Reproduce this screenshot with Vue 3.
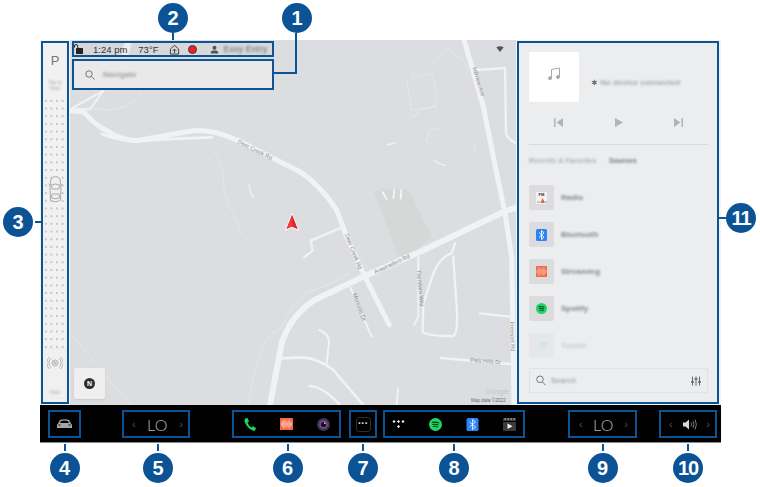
<script setup>
const sources = [
  { name: 'Radio', kind: 'radio' },
  { name: 'Bluetooth', kind: 'bt' },
  { name: 'Streaming', kind: 'stream' },
  { name: 'Spotify', kind: 'spotify' },
  { name: 'Tuneln', kind: 'tunein' },
]
const bars = [3, 6, 9, 5, 8, 4, 7, 9, 5, 3]
const roads = [
  { d: 'M0 212 L40 215 Q75 255 110 272 Q150 300 200 302 Q290 285 370 272 Q430 268 500 300 L600 350 L690 395 Q750 435 800 510 L830 590 L880 700 L958 855', w: 15 },
  { d: 'M95 282 Q140 300 200 305 Q300 295 425 292', w: 8 },
  { d: 'M0 208 L100 152 L60 208 Z', w: 6 },
  { d: 'M1350 498 L1300 516 L1040 640 L880 710 L730 782 Q660 830 635 910 L600 1095', w: 18 },
  { d: 'M1182 0 L1240 200 L1280 400 L1305 520 L1325 650 L1332 1095', w: 15 },
  { d: 'M1220 90 L1305 84 L1308 280 Q1315 300 1340 310', w: 7 },
  { d: 'M812 564 L722 602 L728 632 L702 652', w: 7 },
  { d: 'M840 740 L905 890', w: 6 },
  { d: 'M1155 610 L1145 640 Q1110 650 1090 700 L1060 790 L1058 875 Q1070 888 1150 888 Q1165 880 1160 800 L1155 730 L1150 650', w: 7 },
  { d: 'M1045 650 L1045 830 L1032 855', w: 6 },
  { d: 'M1230 820 L1320 830', w: 7 },
  { d: 'M1112 954 L1320 972', w: 7 },
  { d: 'M632 955 L700 952 Q750 958 790 990 L880 1095', w: 8 },
  { d: 'M748 870 Q785 885 775 925 L770 970', w: 6 },
  { d: 'M718 1038 Q760 1040 810 1095', w: 7 },
  { d: 'M984 1045 L980 1095', w: 6 },
  { d: 'M537 434 Q540 455 550 474', w: 4 },
  { d: 'M953 315 L977 308', w: 4 },
  { d: 'M1092 360 Q1098 370 1126 376', w: 4 },
]
const paths = [
  'M422 332 Q445 335 462 405 Q455 450 480 500 Q505 540 515 585',
  'M50 200 Q90 215 150 205 Q200 190 215 155',
  'M0 880 Q70 960 150 1060 L185 1095',
  'M535 1095 Q560 930 605 880 Q640 870 650 830 Q690 760 730 750 Q850 710 860 670',
  'M1030 95 L1030 110 L1010 125 L1025 210 L1095 200 L1100 150 L1085 100 L1030 115',
  'M1085 70 L1130 25 L1180 60 L1195 100',
  'M1020 235 L1045 222 L1045 210 L1100 198 L1098 220',
  'M1110 265 L1078 270 L1068 305 L1090 315',
  'M1210 305 L1216 335',
]
</script>

<template>
  <div class="page">
    <div class="screen">
      <div class="main">
        <aside class="park frame">
          <div class="gear">P</div>
          <div class="hold">Tap to<br />Hold</div>
          <div class="dots">
            <svg class="car-top" width="15" height="30" viewBox="0 0 15 30" fill="none" stroke="#9a9a9a" stroke-width="0.8">
              <path d="M3 5 Q7.500 0 12 5 L13 13 L12.500 26 Q7.500 29.500 2.500 26 L2 13 Z" fill="#f0f0f0" />
              <path d="M3.500 11 Q7.500 9 11.500 11 L11 15 L4 15 Z M4 20 L11 20 L11.500 24 Q7.500 25.500 3.500 24 Z" />
              <path d="M2 11 L0.500 10 M13 11 L14.500 10" />
            </svg>
          </div>
          <div class="nfc">
            <svg width="16" height="16" viewBox="0 0 16 16" fill="none" stroke="#9c9c9c" stroke-width="0.7">
              <circle cx="8" cy="8" r="3" />
              <path d="M4 3.500 A6 6 0 0 0 4 12.500 M12 3.500 A6 6 0 0 1 12 12.500 M2.500 2 A8 8 0 0 0 2.500 14 M13.500 2 A8 8 0 0 1 13.500 14" />
              <path d="M7 9.500 V6.500 L9 9.500 V6.500" />
            </svg>
            <span class="nfc-label">Hold</span>
          </div>
        </aside>

        <section class="map">
          <svg class="map-art" viewBox="0 0 1350 1095" width="450" height="365">
            <path v-for="p in paths" :key="p" :d="p" fill="none" stroke="#e7e8ea" stroke-width="2.500" />
            <path d="M912 456 Q960 438 1016 450 L1085 590 L1040 630 L985 650 Z" fill="#d6d7d7" />
            <path v-for="r in roads" :key="r.d" :d="r.d" fill="none" stroke="#f1f2f3" :stroke-width="r.w" stroke-linecap="round" stroke-linejoin="round" />
            <path d="M973 449 L970 475 M994 449 L992 476 M938 456 L950 478" stroke="#f6f6f7" stroke-width="5" stroke-linecap="round" />
            <g class="map-label">
              <text transform="translate(502 309) rotate(27)">Deer Creek Rd</text>
              <text transform="translate(824 584) rotate(68)">Deer Creek Rd</text>
              <text transform="translate(916 702) rotate(-25)">Arastradero Rd</text>
              <text transform="translate(1040 690) rotate(84)">Thendara Way</text>
              <text transform="translate(848 762) rotate(70)">Manuela Dr</text>
              <text transform="translate(1207 84) rotate(73)">Hillview Ave</text>
              <text transform="translate(1320 845) rotate(88)">Fremont Rd</text>
              <text transform="translate(1200 965) rotate(5)">Palo Hills Dr</text>
              <text class="attrib" x="1203" y="1086">Map data ©2022</text>
              <text class="google" x="1246" y="1062">Google</text>
            </g>
            <path d="M666 520 L686 570 L666 562 L646 570 Z" fill="#f2383a" stroke="#fff" stroke-width="3" stroke-linejoin="round" />
            <path d="M666 524 L682 566 L666 558 Z" fill="#d92b2f" />
            <path d="M1279 22 Q1290 15 1301 22 L1290 36 Z" fill="#555" />
          </svg>

          <div class="status frame">
            <svg class="lock" width="9" height="10" viewBox="0 0 9 10" fill="#222">
              <rect x="2" y="4" width="7" height="6" rx="0.500" />
              <path d="M0.500 3.500 V2 A1.500 1.500 0 0 1 3.500 2 L4 4" fill="none" stroke="#222" stroke-width="1" />
            </svg>
            <span class="clock">1:24 pm</span>
            <span class="temp">73°F</span>
            <svg class="home" width="11" height="11" viewBox="0 0 12 12" fill="none" stroke="#333" stroke-width="1">
              <path d="M1.500 5.500 L6 1.500 L10.500 5.500 V11 H1.500 Z" />
              <path d="M6 10 V6 M4 7.500 L6 5.500 L8 7.500" />
            </svg>
            <span class="rec"></span>
            <svg class="person" width="9" height="9" viewBox="0 0 10 10" fill="#555">
              <circle cx="5" cy="3" r="2.200" />
              <path d="M1 9.500 V8 Q1 6.500 3 6 H7 Q9 6.500 9 8 V9.500 Z" />
            </svg>
            <span class="entry">Easy Entry</span>
          </div>

          <div class="navigate frame">
            <svg width="10" height="10" viewBox="0 0 10 10" fill="none" stroke="#777" stroke-width="1">
              <circle cx="4" cy="4" r="3.200" />
              <path d="M6.500 6.500 L9.500 9.500" />
            </svg>
            <span class="nav-text">Navigate</span>
            <i class="leader"></i>
            <b class="badge b1">1</b>
          </div>

          <button class="compass">
            <span>N</span>
          </button>
        </section>

        <aside class="media frame">
          <div class="now">
            <div class="art">
              <svg width="14" height="14" viewBox="0 0 14 14" fill="none" stroke="#a9a9a9" stroke-width="1">
                <path d="M4.500 11 V2.500 L12.500 1 V9.500" />
                <circle cx="3" cy="11.200" r="1.500" fill="#a9a9a9" />
                <circle cx="11" cy="10" r="1.500" fill="#a9a9a9" />
              </svg>
            </div>
            <span class="no-device"><em>∗</em> <span>No device connected</span></span>
          </div>
          <div class="controls">
            <svg width="9" height="9" viewBox="0 0 9 9" fill="#b3b3b5"><path d="M0 0 H1.500 V9 H0 Z M9 0 V9 L2.500 4.500 Z" /></svg>
            <svg width="8" height="9" viewBox="0 0 8 9" fill="#b3b3b5"><path d="M0 0 L8 4.500 L0 9 Z" /></svg>
            <svg width="9" height="9" viewBox="0 0 9 9" fill="#b3b3b5"><path d="M9 0 H7.500 V9 H9 Z M0 0 V9 L6.500 4.500 Z" /></svg>
          </div>
          <div class="tabs">
            <span class="tab">Recents &amp; Favorites</span>
            <span class="tab on">Sources</span>
          </div>
          <ul class="sources">
            <li v-for="s in sources" :key="s.name" :class="['source', s.kind]">
              <span class="tile">
                <span v-if="s.kind === 'radio'" class="ic-radio">
                  <i>FM</i>
                  <svg width="10" height="5" viewBox="0 0 10 5"><path d="M5.500 0 L8 5 H3.500 Z" fill="#e2603f" /><path d="M0 4 H3 M8 4 H10" stroke="#999" /></svg>
                </span>
                <svg v-else-if="s.kind === 'bt'" width="11" height="12" viewBox="0 0 11 12">
                  <rect width="11" height="12" rx="1.500" fill="#2c83f5" />
                  <path d="M3 3.500 L8 8.200 L5.500 10.500 V1.500 L8 3.800 L3 8.500" fill="none" stroke="#fff" stroke-width="0.900" />
                </svg>
                <svg v-else-if="s.kind === 'stream'" width="11" height="11" viewBox="0 0 11 11">
                  <rect width="11" height="11" rx="1" fill="#f2694a" />
                  <path v-for="(h, i) in bars" :key="i" :d="`M${1 + i} ${5.500 - h / 2} V${5.500 + h / 2}`" stroke="#ffd9cc" stroke-width="0.500" />
                </svg>
                <svg v-else-if="s.kind === 'spotify'" width="11" height="11" viewBox="0 0 11 11" fill="none">
                  <circle cx="5.500" cy="5.500" r="5.500" fill="#1ed760" />
                  <path d="M2.500 3.800 Q5.500 3 8.500 4.300 M3 5.500 Q5.500 4.900 8 6 M3.500 7.200 Q5.500 6.800 7.500 7.700" stroke="#123" stroke-width="0.900" />
                </svg>
                <svg v-else width="11" height="8" viewBox="0 0 11 8">
                  <rect x="5" width="6" height="6" fill="#9fd6df" />
                  <rect y="2" width="4" height="5" fill="none" stroke="#b9dbe2" stroke-width="0.600" />
                </svg>
              </span>
              <span class="source-name">{{ s.name }}</span>
            </li>
          </ul>
          <div class="search">
            <svg width="10" height="11" viewBox="0 0 10 11" fill="none" stroke="#777" stroke-width="1">
              <circle cx="4" cy="4.300" r="3.300" />
              <path d="M6.500 7 L9.500 10.200" />
            </svg>
            <span class="search-text">Search</span>
            <svg class="eq" width="10" height="10" viewBox="0 0 10 10" fill="none" stroke="#666" stroke-width="1">
              <path d="M1.500 0.500 V9.500 M5 0.500 V9.500 M8.500 0.500 V9.500" />
              <path d="M0 6 H3 M3.500 3 H6.500 M7 6 H10" stroke-width="1.300" />
            </svg>
          </div>
          <i class="stem s11"></i>
          <b class="badge b11">11</b>
        </aside>
      </div>

      <footer class="dock">
        <div class="slot f4">
          <svg width="15" height="10" viewBox="0 0 15 10" fill="#a6a6a6">
            <path d="M1 4.500 L3 1 Q7.500 -0.500 12 1 L14 4.500 Q15 5 15 6.500 V9 H0 V6.500 Q0 5 1 4.500 Z" />
            <path d="M3 4 L4 2 Q7.500 1 11 2 L12 4 Z" fill="#000" />
            <path d="M1.500 6 H3.500 M11.500 6 H13.500" stroke="#000" />
          </svg>
          <i class="stem"></i><b class="badge">4</b>
        </div>
        <div class="slot f5 climate">
          <span class="chev">‹</span><span class="lo">LO</span><span class="chev">›</span>
          <i class="stem"></i><b class="badge">5</b>
        </div>
        <div class="slot f6 apps">
          <svg width="12" height="13" viewBox="0 0 12 13" fill="#18d75b">
            <path d="M1 0.500 L3.500 0 L5 3.500 L3.500 5 Q5 8 7.500 9.500 L9 8.200 L12 10 L11 12.500 Q9 13.300 6 11 Q1.500 7.500 0.500 3 Z" />
          </svg>
          <svg width="13" height="12" viewBox="0 0 13 12">
            <rect width="13" height="12" rx="0.500" fill="#f2694a" />
            <path v-for="(h, i) in bars" :key="i" :d="`M${1.500 + i * 1.100} ${6 - h / 2} V${6 + h / 2}`" stroke="#ffe2d6" stroke-width="0.600" />
          </svg>
          <svg width="13" height="13" viewBox="0 0 13 13">
            <circle cx="6.500" cy="6.500" r="6.500" fill="#3e3550" />
            <circle cx="6.500" cy="6.500" r="4.300" fill="#7a4a96" />
            <circle cx="6.500" cy="6.500" r="2.600" fill="#14101c" />
            <circle cx="7.800" cy="5.200" r="0.900" fill="#cbb6da" />
          </svg>
          <i class="stem"></i><b class="badge">6</b>
        </div>
        <div class="slot f7">
          <span class="more">···</span>
          <i class="stem"></i><b class="badge">7</b>
        </div>
        <div class="slot f8 apps">
          <svg width="13" height="9" viewBox="0 0 13 9" fill="#fff">
            <path d="M2 0 L3.500 1.500 L2 3 L0.500 1.500 Z M6.500 0 L8 1.500 L6.500 3 L5 1.500 Z M11 0 L12.500 1.500 L11 3 L9.500 1.500 Z M6.500 5 L8 6.500 L6.500 8 L5 6.500 Z" />
          </svg>
          <svg width="13" height="13" viewBox="0 0 13 13" fill="none">
            <circle cx="6.500" cy="6.500" r="6.500" fill="#1ed760" />
            <path d="M2.800 4.500 Q6.500 3.500 10.200 5 M3.300 6.500 Q6.500 5.700 9.500 7 M3.800 8.500 Q6.500 7.900 9 9" stroke="#10331c" stroke-width="1.100" />
          </svg>
          <svg width="13" height="13" viewBox="0 0 12 13">
            <rect width="12" height="13" rx="1.500" fill="#2c83f5" />
            <path d="M3 4 L9 9 L6 11.500 V1.500 L9 4 L3 9" fill="none" stroke="#fff" stroke-width="0.800" />
          </svg>
          <svg width="13" height="13" viewBox="0 0 13 13">
            <rect width="13" height="13" rx="1" fill="#3a3a3a" />
            <path d="M0 3.500 H13" stroke="#000" />
            <path d="M1.500 1 H3 M4.500 1 H6 M7.500 1 H9 M10.500 1 H12" stroke="#ddd" />
            <path d="M4.500 5.500 L9.500 8.200 L4.500 11 Z" fill="#eee" />
          </svg>
          <i class="stem"></i><b class="badge">8</b>
        </div>
        <div class="slot f9 climate">
          <span class="chev">‹</span><span class="lo">LO</span><span class="chev">›</span>
          <i class="stem"></i><b class="badge">9</b>
        </div>
        <div class="slot f10 climate">
          <span class="chev">‹</span>
          <svg width="14" height="11" viewBox="0 0 14 11" fill="none">
            <path d="M0 3.500 H2.500 L6 0.500 V10.500 L2.500 7.500 H0 Z" fill="#d8d8d8" />
            <path d="M8 3.500 Q9.300 5.500 8 7.500 M10 2 Q12 5.500 10 9 M12 0.500 Q14.800 5.500 12 10.500" stroke="#9a9a9a" stroke-width="0.800" />
          </svg>
          <span class="chev">›</span>
          <i class="stem"></i><b class="badge">10</b>
        </div>
      </footer>

      <b class="badge b2">2</b><i class="stem s2"></i>
      <b class="badge b3">3</b><i class="stem s3"></i>
    </div>
  </div>
</template>

<style>
html, body {
  margin: 0;
  background: #fff;
}
</style>

<style scoped>
.page {
  width: 760px;
  height: 487px;
  padding: 40px 0 0 40px;
  box-sizing: border-box;
  overflow: hidden;
  background: #fff;
  font-family: "Liberation Sans", Arial, sans-serif;
}

.screen {
  position: relative;
  width: 681px;
}

.main {
  display: flex;
  height: 365px;
  background: #f4f4f5;
}

.frame {
  box-sizing: border-box;
  border: 2px solid #0b5394;
}

.park {
  position: relative;
  display: flex;
  flex-direction: column;
  align-items: center;
  flex: none;
  width: 28px;
  height: 363px;
  margin: 1px 1px 0 1px;
  background: #f1f1f1;
}

.gear {
  margin-top: 10px;
  font-size: 13px;
  line-height: 15px;
  color: #777;
}

.hold {
  margin-top: 11px;
  font-size: 5px;
  line-height: 6px;
  text-align: center;
  color: #aaa;
  filter: blur(0.8px);
}

.dots {
  position: relative;
  flex: 1;
  align-self: stretch;
  margin-top: 6px;
  display: flex;
  justify-content: center;
  padding-top: 77px;
  background-image: radial-gradient(circle, #c4c4c4 0.7px, transparent 1px);
  background-size: 5.6px 7.7px;
  background-position: 0 0;
}

.car-top {
  flex: none;
}

.nfc {
  display: flex;
  flex-direction: column;
  align-items: center;
  width: 20px;
  height: 49px;
  margin-bottom: 4px;
  padding-top: 6px;
  box-sizing: border-box;
  border-radius: 2px;
  background: #f0f0f0;
  box-shadow: 0 0 1px #bbb;
}

.nfc-label {
  margin-top: 18px;
  font-size: 5px;
  color: #aaa;
  filter: blur(0.8px);
}

.map {
  position: relative;
  flex: none;
  width: 446px;
  height: 365px;
  overflow: visible;
  background: #dcdde0;
}

.map-art {
  display: block;
}

.map-label text {
  font-family: "Liberation Sans", Arial, sans-serif;
  font-size: 17px;
  fill: #8c8d90;
}

.map-label .attrib {
  font-size: 14px;
  fill: #666;
}

.map-label .google {
  font-size: 22px;
  fill: #c4c5c7;
}

.status {
  position: absolute;
  left: 2px;
  top: 1px;
  display: flex;
  align-items: center;
  width: 202px;
  height: 16px;
  padding-left: 0;
  white-space: nowrap;
  background: linear-gradient(100deg, #d7d7d9 0 25%, #eeeeef 25% 28%, #d7d8da 29%);
}

.lock {
  flex: none;
}

.clock {
  margin-left: 10px;
  font-size: 9.5px;
  color: #333;
}

.temp {
  margin-left: 11px;
  font-size: 9.5px;
  color: #333;
}

.home {
  flex: none;
  margin-left: 10px;
}

.rec {
  flex: none;
  box-sizing: border-box;
  width: 9px;
  height: 9px;
  margin-left: 8px;
  border-radius: 50%;
  border: 1.5px solid #3a3a3a;
  background: #f01f28;
}

.person {
  flex: none;
  margin-left: 13px;
}

.entry {
  margin-left: 5px;
  font-size: 8.5px;
  font-weight: bold;
  color: #8b8b8b;
  filter: blur(1px);
}

.navigate {
  position: absolute;
  left: 2px;
  top: 19px;
  display: flex;
  align-items: center;
  width: 202px;
  height: 31px;
  padding-left: 11px;
  background: #e9e9e9;
}

.nav-text {
  margin-left: 8px;
  font-size: 8px;
  font-weight: bold;
  color: #a3a3a3;
  filter: blur(1px);
}

.leader {
  position: absolute;
  left: 200px;
  top: -28px;
  width: 23px;
  height: 41px;
  box-sizing: border-box;
  border-right: 2px solid #0b5394;
  border-bottom: 2px solid #0b5394;
}

.compass {
  position: absolute;
  left: 4px;
  top: 328px;
  display: flex;
  align-items: center;
  justify-content: center;
  width: 31px;
  height: 31px;
  padding: 0;
  border: none;
  border-radius: 2px;
  background: #efefef;
  box-shadow: 0 1px 2px #c8c8c8;
}

.compass span {
  display: block;
  width: 11px;
  height: 11px;
  border-radius: 50%;
  background: #2e2e2e;
  color: #fff;
  font-size: 7px;
  font-weight: bold;
  line-height: 11px;
  text-align: center;
}

.media {
  position: relative;
  flex: none;
  display: flex;
  flex-direction: column;
  width: 202px;
  height: 363px;
  margin: 1px 0 0 1px;
  padding: 9px 9px 0 10px;
  background: #ecedef;
}

.now {
  display: flex;
  align-items: center;
}

.art {
  display: flex;
  align-items: center;
  justify-content: center;
  width: 50px;
  height: 50px;
  padding-bottom: 6px;
  box-sizing: border-box;
  border-radius: 2px;
  background: #fff;
}

.no-device {
  margin: 10px 0 0 12px;
  font-size: 8px;
  font-weight: bold;
  color: #aaa;
}

.no-device em {
  font-style: normal;
  color: #666;
}

.no-device span {
  filter: blur(1px);
  display: inline-block;
}

.controls {
  display: flex;
  justify-content: space-between;
  align-items: center;
  height: 9px;
  margin-top: 16px;
  padding: 0 25px;
}

.tabs {
  display: flex;
  gap: 16px;
  margin-top: 17px;
  padding-top: 11px;
  border-top: 1px solid #d8d9dc;
  font-size: 7px;
  line-height: 9px;
  font-weight: bold;
}

.tab {
  width: 64px;
  white-space: nowrap;
  color: #b3b3b3;
  filter: blur(0.8px);
}

.tab.on {
  width: auto;
  color: #777;
}

.sources {
  display: flex;
  flex-direction: column;
  gap: 12px;
  margin: 20px 0 0;
  padding: 0;
  list-style: none;
}

.source {
  display: flex;
  align-items: center;
  gap: 7px;
}

.tile {
  display: flex;
  align-items: center;
  justify-content: center;
  width: 25px;
  height: 25px;
  border-radius: 2px;
  background: #dcdcde;
}

.source-name {
  font-size: 8px;
  font-weight: bold;
  color: #888;
  filter: blur(1px);
}

.tunein {
  opacity: 0.35;
}

.ic-radio {
  display: flex;
  flex-direction: column;
  align-items: center;
  width: 11px;
  height: 12px;
  background: #f2f2f2;
}

.ic-radio i {
  font-size: 4px;
  line-height: 6px;
  font-style: normal;
  font-weight: bold;
  color: #333;
}

.search {
  display: flex;
  align-items: center;
  gap: 5px;
  height: 25px;
  margin-top: 10px;
  padding: 0 6px;
  box-sizing: border-box;
  border: 1px solid #e0e1e3;
  border-radius: 1px;
}

.search-text {
  font-size: 7.5px;
  font-weight: bold;
  color: #aaa;
  filter: blur(1px);
}

.eq {
  margin-left: auto;
}

.dock {
  display: flex;
  height: 38px;
  padding-top: 5px;
  box-sizing: border-box;
  background: #000;
  border-bottom: 1px solid #8a8a8a;
}

.slot {
  position: relative;
  flex: none;
  display: flex;
  align-items: center;
  justify-content: center;
  box-sizing: border-box;
  height: 28px;
  border: 2px solid #0b5394;
}

.apps {
  gap: 24px;
}

.climate {
  justify-content: space-between;
  padding: 0 5px 0 8px;
}

.f4 { width: 33px; margin-left: 8px; }
.f5 { width: 68px; margin-left: 41px; }
.f6 { width: 109px; margin-left: 42px; }
.f7 { width: 28px; margin-left: 8px; }
.f8 { width: 142px; margin-left: 6px; }
.f9 { width: 69px; margin-left: 43px; padding: 0 7px 0 9px; }
.f10 { width: 58px; margin-left: 22px; }

.chev {
  font-size: 11px;
  line-height: 12px;
  color: #555;
}

.lo {
  font-family: Lato, "Liberation Sans", sans-serif;
  font-weight: 300;
  font-size: 16px;
  letter-spacing: 0.5px;
  color: #b5b5b5;
}

.more {
  width: 13px;
  height: 13px;
  border: 1px solid #2e2e2e;
  border-radius: 3px;
  color: #e5e5e5;
  font-size: 10px;
  font-weight: bold;
  line-height: 12px;
  text-align: center;
}

.stem {
  position: absolute;
  left: 50%;
  top: 32px;
  width: 2px;
  height: 7px;
  margin-left: -1px;
  background: #0b5394;
}

.badge {
  position: absolute;
  left: 50%;
  top: 41px;
  width: 30px;
  height: 30px;
  margin-left: -15px;
  border-radius: 50%;
  background: #0b5394;
  color: #fff;
  font-size: 20px;
  font-weight: bold;
  line-height: 30px;
  text-align: center;
  font-style: normal;
}

.f5 .stem,
.f5 .badge {
  left: calc(50% + 2px);
}

.f6 .stem,
.f6 .badge {
  left: calc(50% + 1px);
}

.f10 .badge,
.b11 {
  letter-spacing: -1px;
}

.b1 {
  left: 223px;
  top: -58px;
}

.b2 {
  left: 133px;
  top: -37px;
}

.s2 {
  left: 133px;
  top: -7px;
  height: 7px;
}

.b3 {
  left: -22px;
  top: 167px;
}

.s3 {
  left: -5px;
  top: 181px;
  width: 6px;
  height: 2px;
  margin-left: 0;
}

.s11 {
  left: auto;
  right: -10px;
  top: 174px;
  width: 9px;
  height: 2px;
}

.b11 {
  left: auto;
  right: -39px;
  top: 160px;
}
</style>
